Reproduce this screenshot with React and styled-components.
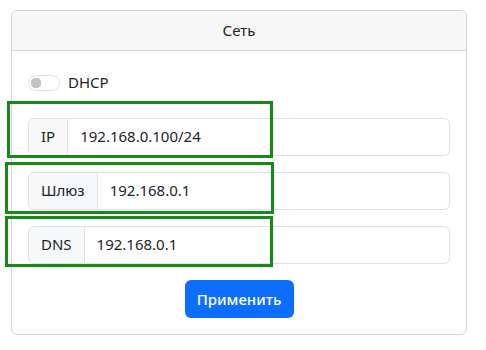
import React, { useState } from 'react';
import styled, { createGlobalStyle } from 'styled-components';

const GlobalStyle = createGlobalStyle`
  * { box-sizing: border-box; }
  body {
    margin: 0;
    background: #fff;
    font-family: 'Noto Sans', 'Open Sans', sans-serif;
    font-size: 16px;
    line-height: 1.5;
    color: #212529;
  }
`;

const highlights = [
  { left: 7, top: 101, width: 266, height: 57 },
  { left: 5, top: 162, width: 269, height: 52 },
  { left: 5, top: 216, width: 268, height: 51 },
];

const fields = [
  { label: 'IP', value: '192.168.0.100/24' },
  { label: 'Шлюз', value: '192.168.0.1' },
  { label: 'DNS', value: '192.168.0.1' },
];

const NetworkSettings = () => {
  const [dhcp, setDhcp] = useState(false);
  const [values, setValues] = useState(fields.map((f) => f.value));

  const handleChange = (i) => (e) => {
    const next = [...values];
    next[i] = e.target.value;
    setValues(next);
  };

  return (
    <StyledPage>
      <GlobalStyle />
      <StyledCard>
        <StyledHeader>Сеть</StyledHeader>
        <StyledBody>
          <StyledCheck>
            <StyledSwitch
              type="checkbox"
              checked={dhcp}
              onChange={() => setDhcp(!dhcp)}
            />
            DHCP
          </StyledCheck>
          {fields.map((f, i) => (
            <StyledGroup key={f.label}>
              <StyledAddon>{f.label}</StyledAddon>
              <StyledInput value={values[i]} onChange={handleChange(i)} />
            </StyledGroup>
          ))}
          <StyledActions>
            <StyledButton>Применить</StyledButton>
          </StyledActions>
        </StyledBody>
      </StyledCard>
      {highlights.map((h, i) => (
        <StyledHighlight key={i} style={h} />
      ))}
    </StyledPage>
  );
};

const StyledPage = styled.div`
  position: relative;
  padding: 10px 19px 0 11px;
  width: 486px;
`;

const StyledCard = styled.div`
  width: 456px;
  border: 1px solid #d3d4d5;
  border-radius: 6px;
  background: #fff;
  overflow: hidden;
`;

const StyledHeader = styled.div`
  padding: 8px 16px;
  background: #f7f7f7;
  border-bottom: 1px solid #d3d4d5;
  text-align: center;
  font-size: 15px;
`;

const StyledBody = styled.div`
  display: flex;
  flex-direction: column;
  gap: 16px;
  padding: 16px;
`;

const StyledCheck = styled.label`
  display: flex;
  align-items: center;
  gap: 8px;
  height: 24px;
  margin-top: 4px;
  margin-bottom: 7px;
  font-size: 15px;
`;

const StyledSwitch = styled.input`
  appearance: none;
  margin: 0;
  width: 32px;
  height: 16px;
  border: 1px solid #dee2e6;
  border-radius: 8px;
  background: #fff radial-gradient(circle at 7px 50%, #c4c4c4 0 5px, transparent 5.5px);
  cursor: pointer;
`;

const StyledGroup = styled.div`
  display: flex;
  height: 38px;
`;

const StyledAddon = styled.span`
  display: flex;
  align-items: center;
  padding: 0 12px;
  background: #f8f9fa;
  border: 1px solid #dee2e6;
  border-radius: 6px 0 0 6px;
  font-size: 15px;
`;

const StyledInput = styled.input`
  flex: 1;
  min-width: 0;
  padding: 0 12px;
  border: 1px solid #dee2e6;
  border-left: none;
  border-radius: 0 6px 6px 0;
  font: inherit;
  font-size: 15px;
  color: #212529;
  outline: none;
`;

const StyledActions = styled.div`
  display: flex;
  justify-content: center;
`;

const StyledButton = styled.button`
  width: 109px;
  height: 38px;
  border: none;
  border-radius: 6px;
  background: #0d6efd;
  color: #fff;
  font-family: inherit;
  font-size: 15px;
  font-weight: 500;
  cursor: pointer;
`;

const StyledHighlight = styled.div`
  position: absolute;
  border: 3px solid #158a15;
  pointer-events: none;
`;

export default NetworkSettings;
